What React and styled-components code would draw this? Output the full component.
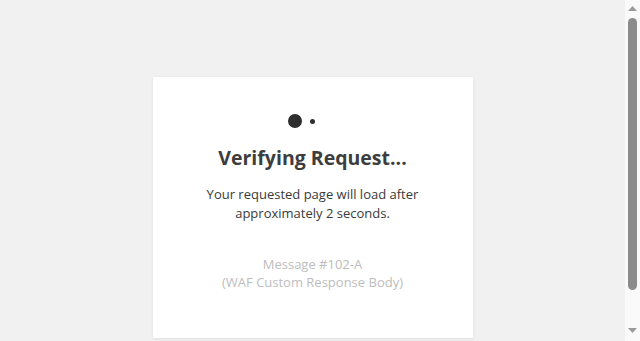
import React from "react";
import styled, { createGlobalStyle } from "styled-components";

const Global = createGlobalStyle`
  html, body { margin: 0; padding: 0; height: 100%; }
  body {
    background: #f1f1f1;
    font-family: "Open Sans", "Liberation Sans", sans-serif;
    overflow: hidden;
  }
  #root { height: 100%; }
`;

const Window = styled.div`
  display: flex;
  height: 100%;
`;

const Viewport = styled.main`
  flex: 1;
  min-width: 0;
  overflow: hidden;
`;

const Page = styled.div`
  padding: 77px 0 52px;
  display: flex;
  justify-content: center;
`;

const Card = styled.div`
  width: 320px;
  height: 261px;
  box-sizing: border-box;
  background: #fff;
  box-shadow: 0 1px 3px rgba(0, 0, 0, 0.08);
  display: flex;
  flex-direction: column;
  align-items: center;
  padding-top: 37px;
  text-align: center;
`;

const Dots = styled.div`
  display: flex;
  height: 14px;
`;

const DotSlot = styled.span`
  width: 18px;
  display: flex;
  align-items: center;
  justify-content: center;
`;

const Dot = styled.span`
  display: block;
  width: ${(p) => p.size}px;
  height: ${(p) => p.size}px;
  border-radius: 50%;
  background: #2e2e2e;
`;

const Title = styled.h1`
  margin: 18px 0 0;
  font-size: 19.5px;
  font-weight: 700;
  color: #3d3d3d;
  line-height: 24px;
`;

const Text = styled.p`
  margin: 0;
  font-size: 13px;
  line-height: ${(p) => (p.muted ? 18 : 19)}px;
  color: ${(p) => (p.muted ? "#bdbdbd" : "#3a3a3a")};
  margin-top: ${(p) => p.top}px;
`;

const Scrollbar = styled.div`
  width: 15px;
  flex: none;
  background: #fafafa;
  display: flex;
  flex-direction: column;
  align-items: center;
`;

const ArrowBox = styled.div`
  height: 17px;
  display: flex;
  justify-content: center;
  align-items: ${(p) => (p.down ? "flex-start" : "flex-end")};
  padding: ${(p) => (p.down ? "4px 0 0" : "0 0 6px")};
  box-sizing: border-box;
`;

const Track = styled.div`
  flex: 1;
  padding-top: 1px;
`;

const Thumb = styled.div`
  width: 9px;
  height: 272px;
  border-radius: 5px;
  background: #8c8c8c;
`;

const Arrow = ({ down }) => (
  <svg width="9" height="5" viewBox="0 0 9 5">
    <path d={down ? "M0 0H9L4.5 5Z" : "M0 5H9L4.5 0Z"} fill="#9a9a9a" />
  </svg>
);

export default function App() {
  return (
    <>
      <Global />
      <Window>
        <Viewport>
          <Page>
            <Card>
              <Dots>
                <DotSlot>
                  <Dot size={14} />
                </DotSlot>
                <DotSlot>
                  <Dot size={5} />
                </DotSlot>
                <DotSlot>
                  <Dot size={0} />
                </DotSlot>
              </Dots>
              <Title>Verifying Request...</Title>
              <Text top={15}>
                Your requested page will load after
                <br />
                approximately 2 seconds.
              </Text>
              <Text muted top={32}>
                Message #102-A
                <br />
                (WAF Custom Response Body)
              </Text>
            </Card>
          </Page>
        </Viewport>
        <Scrollbar>
          <ArrowBox>
            <Arrow />
          </ArrowBox>
          <Track>
            <Thumb />
          </Track>
          <ArrowBox down>
            <Arrow down />
          </ArrowBox>
        </Scrollbar>
      </Window>
    </>
  );
}
